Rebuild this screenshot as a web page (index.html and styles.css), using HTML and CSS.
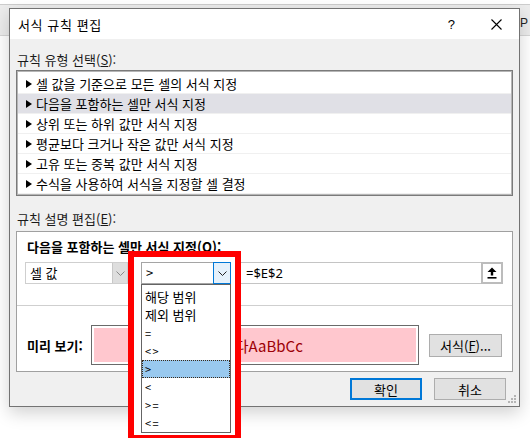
FILE: index.html
```html
<!DOCTYPE html>
<html lang="ko">
<head>
<meta charset="utf-8">
<title>서식 규칙 편집</title>
<link rel="stylesheet" href="styles.css">
</head>
<body>
<div class="backdrop"><span class="bg-letter">P</span></div>

<div class="dialog">
  <div class="titlebar">
    <span class="title">서식 규칙 편집</span>
    <span class="help">?</span>
    <svg class="close" width="11" height="11" viewBox="0 0 11 11"><path d="M0.5 0.5 L10.5 10.5 M10.5 0.5 L0.5 10.5" stroke="#000" stroke-width="1.1" fill="none"/></svg>
  </div>
  <div class="body">
    <div class="label">규칙 유형 선택(<u>S</u>):</div>
    <div class="listbox">
      <div class="row"><span class="tri"></span>셀 값을 기준으로 모든 셀의 서식 지정</div>
      <div class="row sel"><span class="tri"></span>다음을 포함하는 셀만 서식 지정</div>
      <div class="row"><span class="tri"></span>상위 또는 하위 값만 서식 지정</div>
      <div class="row"><span class="tri"></span>평균보다 크거나 작은 값만 서식 지정</div>
      <div class="row"><span class="tri"></span>고유 또는 중복 값만 서식 지정</div>
      <div class="row last"><span class="tri"></span>수식을 사용하여 서식을 지정할 셀 결정</div>
    </div>
    <div class="label label2">규칙 설명 편집(<u>E</u>):</div>
    <div class="desc">
      <div class="desc-title">다음을 포함하는 셀만 서식 지정(O):</div>
      <div class="combos">
        <div class="combo combo1">
          <span class="combo-text">셀 값</span>
          <span class="combo-btn btn1"><svg width="9" height="5" viewBox="0 0 9 5"><polyline points="0.5,0.5 4.5,4.5 8.5,0.5" fill="none" stroke="#8a8a8a" stroke-width="1"/></svg></span>
        </div>
        <div class="combo combo2">
          <span class="combo-text">&gt;</span>
          <span class="combo-btn btn2"><svg width="9" height="5" viewBox="0 0 9 5"><polyline points="0.5,0.5 4.5,4.5 8.5,0.5" fill="none" stroke="#222" stroke-width="1"/></svg></span>
          <div class="droplist">
            <div class="item">해당 범위</div>
            <div class="item">제외 범위</div>
            <div class="item sym">=</div>
            <div class="item sym">&lt;&gt;</div>
            <div class="item sym hi">&gt;</div>
            <div class="item sym">&lt;</div>
            <div class="item sym">&gt;=</div>
            <div class="item sym">&lt;=</div>
          </div>
        </div>
        <div class="field">
          <span class="field-text">=$E$2</span>
          <span class="upload"><svg width="10" height="12" viewBox="0 0 10 12"><path d="M5 0.5 L9.5 5 L6.2 5 L6.2 8.5 L3.8 8.5 L3.8 5 L0.5 5 Z" fill="#000"/><rect x="0.5" y="10" width="9" height="1.6" fill="#000"/></svg></span>
        </div>
      </div>
      <div class="sep"></div>
      <div class="preview-row">
        <span class="preview-label">미리 보기:</span>
        <div class="preview"><div class="preview-inner">가나다AaBbCc</div></div>
        <span class="button fmt">서식(<u>F</u>)...</span>
      </div>
    </div>
    <div class="actions">
      <span class="button ok">확인</span>
      <span class="button cancel">취소</span>
    </div>
  </div>
  <svg class="grip" width="9" height="9" viewBox="0 0 9 9">
    <rect x="6" y="0" width="2" height="2" fill="#b4b4b4"/>
    <rect x="3" y="3" width="2" height="2" fill="#b4b4b4"/>
    <rect x="6" y="3" width="2" height="2" fill="#b4b4b4"/>
    <rect x="0" y="6" width="2" height="2" fill="#b4b4b4"/>
    <rect x="3" y="6" width="2" height="2" fill="#b4b4b4"/>
    <rect x="6" y="6" width="2" height="2" fill="#b4b4b4"/>
  </svg>
</div>

<div class="redbox"></div>
</body>
</html>
```

FILE: styles.css
```css
html, body {
  margin: 0;
  padding: 0;
}
body {
  width: 530px;
  height: 438px;
  overflow: hidden;
  position: relative;
  background: #ffffff;
  font-family: "Noto Sans CJK KR", "Noto Sans", sans-serif;
  font-size: 13px;
  color: #000;
}
u { text-decoration: underline; text-underline-offset: 1px; }

.backdrop {
  margin-top: 4px;
  height: 30px;
  background: #ececec;
  border-top: 1px solid #cdcdcd;
  border-bottom: 1px solid #d6d6d6;
  display: flex;
  justify-content: flex-end;
}
.bg-letter {
  font-family: "Liberation Sans", sans-serif;
  font-size: 12px;
  line-height: 13px;
  padding-top: 12px;
  margin-right: 2px;
  color: #222;
}

.dialog {
  position: absolute;
  left: 9px;
  top: 8px;
  width: 511px;
  height: 399px;
  box-sizing: border-box;
  border: 1px solid #737373;
  background: #f0f0f0;
  box-shadow: 0 6px 16px rgba(0, 0, 0, 0.18);
  display: flex;
  flex-direction: column;
}

.titlebar {
  height: 30px;
  background: #fff;
  display: flex;
  align-items: center;
  padding-left: 8px;
}
.title { font-size: 13px; letter-spacing: 0.6px; }
.help {
  margin-left: auto;
  font-family: "Liberation Sans", sans-serif;
  font-size: 13px;
  margin-right: 36px;
}
.close { margin-right: 17px; }

.body {
  flex: 1;
  padding: 13px 6px 6px 6px;
  display: flex;
  flex-direction: column;
}
.label {
  height: 16px;
  line-height: 16px;
  padding-left: 1px;
  color: #1a1a1a;
}
.label2 { margin-top: 15px; }

.listbox {
  margin-top: 2px;
  height: 126px;
  box-sizing: border-box;
  border: 1px solid #7a7a7a;
  box-shadow: inset 0 0 0 1px #b5b5b5;
  background: #fff;
  padding: 3px 1px 1px 1px;
}
.row {
  height: 19px;
  line-height: 19px;
  border-bottom: 1px solid #f0f0f0;
  display: flex;
  align-items: center;
  padding-left: 8px;
}
.row.sel { background: #e0e0e6; }
.tri {
  width: 0;
  height: 0;
  border-left: 6px solid #000;
  border-top: 4px solid transparent;
  border-bottom: 4px solid transparent;
  margin-right: 4px;
}

.desc {
  margin-top: 4px;
  height: 141px;
  box-sizing: border-box;
  border: 1px solid #a0a0a0;
  background: #fff;
  padding: 7px 9px 6px 8px;
  display: flex;
  flex-direction: column;
}
.desc-title {
  height: 16px;
  line-height: 16px;
  padding-left: 2px;
  font-weight: bold;
}
.combos {
  margin-top: 7px;
  height: 22px;
  display: flex;
}
.combo {
  height: 22px;
  box-sizing: border-box;
  display: flex;
  align-items: stretch;
  background: #fff;
}
.combo1 {
  width: 103px;
  border: 1px solid #cfcfcf;
}
.combo2 {
  width: 90px;
  margin-left: 13px;
  border: 1px solid #a5a5a5;
  position: relative;
  z-index: 6;
}
.combo-text {
  flex: 1;
  line-height: 20px;
  padding-left: 4px;
}
.combo-btn {
  display: flex;
  align-items: center;
  justify-content: center;
}
.btn1 {
  width: 14px;
  background: #dedede;
  border-left: 1px solid #c8c8c8;
}
.btn2 {
  width: 16px;
  background: #e5f1fb;
  border: 1px solid #0078d7;
  margin: -1px -1px -1px 0;
}
.field {
  flex: 1;
  margin-left: 9px;
  height: 22px;
  box-sizing: border-box;
  border: 1px solid #c4c4c4;
  display: flex;
  align-items: stretch;
}
.field-text {
  flex: 1;
  line-height: 20px;
  padding-left: 5px;
  font-family: "Noto Sans", sans-serif;
}
.upload {
  width: 22px;
  box-sizing: border-box;
  border: 2px solid #bcbcbc;
  margin: -1px -1px -1px 0;
  background: #fff;
  display: flex;
  align-items: center;
  justify-content: center;
}

.droplist {
  position: absolute;
  left: -1px;
  top: 21px;
  width: 90px;
  box-sizing: border-box;
  border: 1px solid #646464;
  background: #fff;
  padding-top: 3px;
  padding-bottom: 0;
}
.item {
  height: 18px;
  line-height: 18px;
  padding-left: 3px;
  box-sizing: border-box;
}
.item.sym { font-size: 11px; padding-left: 3px; letter-spacing: 1.5px; }
.item.hi {
  background: #99c9ef;
  outline: 1px dotted #3a2a1a;
  outline-offset: -1px;
}

.sep {
  margin: 21px -9px 0 -8px;
  height: 1px;
  background: #cfcfcf;
}
.preview-row {
  margin-top: 19px;
  height: 40px;
  display: flex;
  align-items: center;
}
.preview-label {
  width: 64px;
  padding-left: 2px;
  font-weight: bold;
}
.preview {
  width: 328px;
  height: 40px;
  box-sizing: border-box;
  border: 1px solid #6a6a6a;
  padding: 2px;
  background: #fff;
}
.preview-inner {
  height: 100%;
  background: #ffc7ce;
  color: #9c0006;
  font-size: 15px;
  display: flex;
  align-items: center;
  justify-content: center;
}
.button {
  box-sizing: border-box;
  background: #e1e1e1;
  border: 1px solid #adadad;
  display: flex;
  align-items: center;
  justify-content: center;
}
.fmt {
  margin-left: 10px;
  width: 73px;
  height: 23px;
}
.actions {
  margin-top: 6px;
  height: 22px;
  display: flex;
  justify-content: flex-end;
  gap: 12px;
  padding-right: 7px;
}
.actions .button { width: 72px; height: 22px; }
.ok { border: 2px solid #0078d7; }

.grip {
  position: absolute;
  right: 2px;
  bottom: 2px;
}

.redbox {
  position: absolute;
  left: 128px;
  top: 251px;
  width: 113px;
  height: 190px;
  box-sizing: border-box;
  border: 6px solid #ff0000;
  background: #fff;
  z-index: 5;
}
```
